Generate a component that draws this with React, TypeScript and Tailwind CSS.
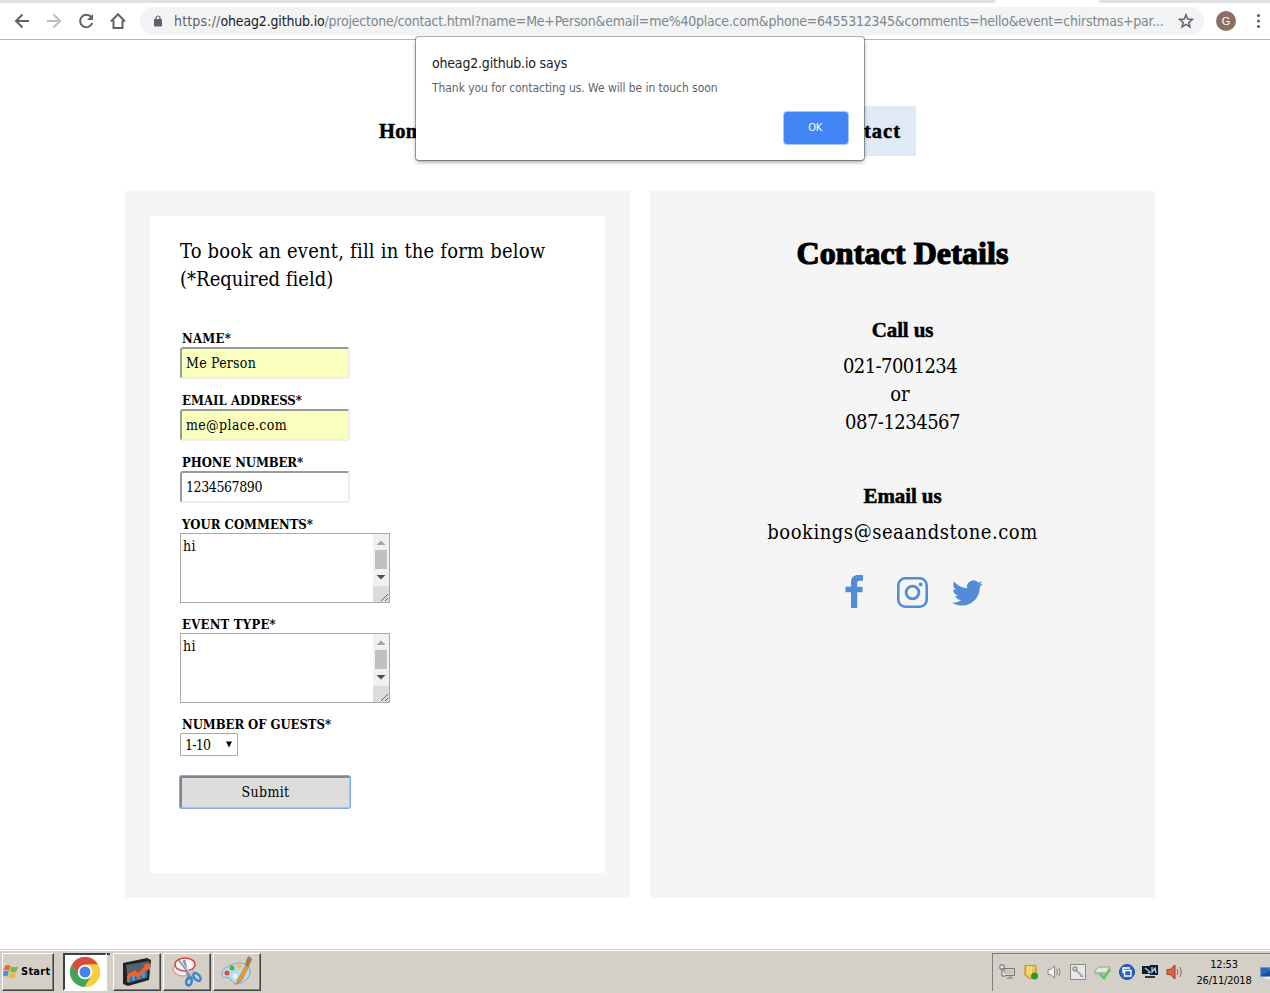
import type { ReactNode } from 'react';

const slab = "font-['DejaVu_Serif_Condensed','DejaVu_Serif',serif]";
const tahoma = "font-['DejaVu_Sans_Condensed','DejaVu_Sans',sans-serif]";
const display = "font-['Liberation_Serif',serif] font-bold";

function Toolbar() {
  return (
    <header className="flex h-10 shrink-0 flex-col border-b border-[#b3b6b5] bg-white">
      <div className="flex h-[3px] shrink-0 justify-between">
        <div className="w-[996px] rounded-br-[4px] bg-[#dee1e6]" />
        <div className="w-[171px] rounded-bl-[4px] bg-[#dee1e6]" />
      </div>
      <div className="flex items-center pt-1">
        <svg className="ml-[14px]" width="16" height="28" viewBox="0 0 16 28" fill="none" stroke="#5f6368" strokeWidth="2">
          <path d="M15 14H2.500M8.500 7.500 2 14l6.500 6.500" />
        </svg>
        <svg className="ml-4" width="16" height="28" viewBox="0 0 16 28" fill="none" stroke="#babcbe" strokeWidth="2">
          <path d="M1 14h12.500M7.500 7.500 14 14l-6.500 6.500" />
        </svg>
        <svg className="ml-4" width="16" height="28" viewBox="0 0 16 28" fill="none" stroke="#5f6368" strokeWidth="2">
          <path d="M13.300 10.300A6.200 6.200 0 1 0 14.200 16" />
          <path d="M15 7v6H9z" fill="#5f6368" stroke="none" />
        </svg>
        <svg className="ml-4" width="16" height="28" viewBox="0 0 16 28" fill="none" stroke="#5f6368" strokeWidth="2">
          <path d="M1 14.500 8 7.200l7 7.300M3.500 13.500v7.500h9v-7.500" />
        </svg>
        <div className="ml-[14px] flex h-7 w-[1064px] items-center rounded-full bg-[#f1f3f4]">
          <svg className="ml-[14px]" width="8" height="12" viewBox="0 0 8 12">
            <rect y="4" width="8" height="7.500" rx="1" fill="#5f6368" />
            <path d="M2 5V3a2 2 0 0 1 4 0v2" fill="none" stroke="#5f6368" strokeWidth="1.200" />
          </svg>
          <div className={`${tahoma} ml-3 flex w-[990px] text-[14px] leading-[18px] whitespace-nowrap`}>
            <span className="tracking-[0.17px] text-[#5f6368]">https://</span>
            <span className="tracking-[-0.17px] text-[#202124]">oheag2.github.io</span>
            <span className="tracking-[-0.226px] text-[#80868b]">
              /projectone/contact.html?name=Me+Person&amp;email=me%40place.com&amp;phone=6455312345&amp;comments=hello&amp;event=chirstmas+par...
            </span>
          </div>
          <svg className="ml-[14px]" width="16" height="16" viewBox="0 0 16 16" fill="none" stroke="#5f6368" strokeWidth="1.500">
            <path d="m8 1.800 1.700 4.300 4.700.3-3.600 3 1.200 4.500L8 11.400l-4 2.500 1.200-4.500-3.600-3 4.700-.3z" />
          </svg>
        </div>
        <div className="ml-3 flex size-5 items-center justify-center rounded-full bg-[#8d6e63] font-['Liberation_Sans',sans-serif] text-[11px] text-white">G</div>
        <svg className="ml-5" width="6" height="16" viewBox="0 0 6 16" fill="#5f6368">
          <circle cx="2.500" cy="2.500" r="1.600" /><circle cx="2.500" cy="8" r="1.600" /><circle cx="2.500" cy="13.500" r="1.600" />
        </svg>
      </div>
    </header>
  );
}

function Dialog() {
  return (
    <div role="dialog" className={`${tahoma} absolute top-[37px] left-[416px] z-10 flex h-[123px] w-[448px] flex-col rounded-[3px] bg-white px-4 pt-4 shadow-[0_0_0_1px_rgba(0,0,0,0.3),0_2px_4px_rgba(0,0,0,0.4)]`}>
      <div className="text-[14px] leading-5 tracking-[-0.19px] text-[#202124]">oheag2.github.io says</div>
      <div className="mt-[5px] text-[12px] leading-5 tracking-[-0.066px] text-[#5f6368]">Thank you for contacting us. We will be in touch soon</div>
      <button className="mt-[13px] mr-[-1px] h-[34px] w-[66px] self-end rounded-[4px] border border-[#a9c7fa] bg-[#4285f4] pt-px pr-0.5 text-[11px] tracking-[-0.3px] text-white">OK</button>
    </div>
  );
}

function Label({ children, track }: { children: ReactNode; track: string }) {
  return <label className={`block h-[18px] pl-0.5 text-[13px] leading-[19px] font-bold whitespace-nowrap ${track}`}>{children}</label>;
}

function Field({ label, track, value, valueTrack, filled }: { label: string; track: string; value: string; valueTrack: string; filled?: boolean }) {
  return (
    <div>
      <Label track={track}>{label}</Label>
      <input
        defaultValue={value}
        className={`block h-8 w-[170px] rounded-[3px] border-2 border-t-[#9a9a9a] border-r-[#eeeeee] border-b-[#eeeeee] border-l-[#9a9a9a] px-1 text-[14px] outline-none ${valueTrack} ${filled ? 'bg-[#faffbd]' : 'bg-white'}`}
      />
    </div>
  );
}

function TextArea({ label, track }: { label: string; track: string }) {
  return (
    <div>
      <Label track={track}>{label}</Label>
      <div className="flex h-[70px] w-[210px] justify-between border border-[#a9a9a9] bg-white">
        <span className="pt-0.5 pl-0.5 text-[14px] leading-5 tracking-[0.5px]">hi</span>
        <div className="flex w-4 flex-col items-center bg-[#f1f1f1]">
          <svg width="16" height="16" viewBox="0 0 16 16"><path d="m3.500 11 4.500-4.500 4.500 4.500z" fill="#a3a3a3" /></svg>
          <div className="h-[19px] w-3 bg-[#c1c1c1]" />
          <svg width="16" height="17" viewBox="0 0 16 17"><path d="m3.500 6 4.500 4.500L12.500 6z" fill="#505050" /></svg>
          <svg className="bg-[#dcdcdc]" width="16" height="16" viewBox="0 0 16 16"><path d="m8 15 7-7M12 15l3-3" stroke="#666" /></svg>
        </div>
      </div>
    </div>
  );
}

function BookingForm() {
  return (
    <section className="h-[707px] w-[505px] bg-[#f5f5f5] p-[25px]">
      <form className="flex h-[657px] flex-col bg-white px-[30px] pt-[21px]">
        <p className="h-[92px] text-[20px] leading-7 whitespace-nowrap">
          <span className="block tracking-[0.2px]">To book an event, fill in the form below</span>
          <span className="block tracking-[0.03px]">(*Required field)</span>
        </p>
        <div className="flex flex-col gap-3">
          <Field label="NAME*" track="tracking-[0.25px]" value="Me Person" valueTrack="tracking-[0.24px]" filled />
          <Field label="EMAIL ADDRESS*" track="tracking-[0.04px]" value="me@place.com" valueTrack="tracking-[0.36px]" filled />
          <Field label="PHONE NUMBER*" track="tracking-[-0.09px]" value="1234567890" valueTrack="tracking-[-0.41px]" />
          <TextArea label="YOUR COMMENTS*" track="tracking-[0.01px]" />
          <TextArea label="EVENT TYPE*" track="tracking-[0.25px]" />
          <div>
            <Label track="tracking-[-0.05px]">NUMBER OF GUESTS*</Label>
            <div className="flex h-[23px] w-[58px] items-center justify-between rounded-[1px] border border-[#a9a9a9] bg-white pr-[5px] pl-1 text-[14px] tracking-[-0.8px]">
              <span className="pt-0.5">1-10</span>
              <svg width="6" height="8" viewBox="0 0 6 8"><path d="M0 .5h6L3 6.500z" /></svg>
            </div>
          </div>
        </div>
        <button type="button" className="mt-5 h-8 w-[170px] shrink-0 rounded-[2px] border border-t-2 border-l-2 border-t-[#7f8592] border-r-[#b9bfca] border-b-[#b9bfca] border-l-[#7f8592] bg-[#dddddd] text-[14px] tracking-[0.35px] shadow-[0_0_0_1px_#7ea9ee]">Submit</button>
      </form>
    </section>
  );
}

function ContactDetails() {
  return (
    <section className="flex h-[707px] w-[505px] flex-col items-center bg-[#f5f5f5] pt-[41px] whitespace-nowrap">
      <h1 className={`${display} text-[32px] leading-[42px] tracking-[0.1px] [-webkit-text-stroke:1.2px_black]`}>Contact Details</h1>
      <h2 className={`${display} mt-[42px] text-[21px] leading-7 tracking-[-0.14px] [-webkit-text-stroke:0.5px_black]`}>Call us</h2>
      <p className="mt-2 flex flex-col items-center text-[20px] leading-7">
        <span className="mr-[5px] tracking-[-0.58px]">021-7001234</span>
        <span className="mr-[5px]">or</span>
        <span className="tracking-[-0.5px]">087-1234567</span>
      </p>
      <h2 className={`${display} mt-[46px] text-[21px] leading-7 tracking-[-0.1px] [-webkit-text-stroke:0.5px_black]`}>Email us</h2>
      <p className="mt-2 text-[20px] leading-7 tracking-[0.53px]">bookings@seaandstone.com</p>
      <div className="mt-[29px] ml-[23px] flex items-center text-[#528cd6]">
        <svg width="18" height="33" viewBox="0 0 18 33" fill="currentColor">
          <path d="M18 .3v5.400h-3.300c-2 0-2.500 1-2.500 2.500v3.500h5.300v5.500h-5.300V33H6V17.200H.5v-5.500H6V7.300C6 2.600 8.800 0 13.200 0c2 0 4 .1 4.800.3z" />
        </svg>
        <svg className="mt-[2px] ml-[34px]" width="31" height="31" viewBox="0 0 31 31" fill="none" stroke="currentColor">
          <rect x="1.300" y="1.300" width="28.400" height="28.400" rx="7" strokeWidth="2.600" />
          <circle cx="15.500" cy="15.500" r="6.400" strokeWidth="2.800" />
          <circle cx="23.700" cy="7.400" r="1.900" fill="currentColor" stroke="none" />
        </svg>
        <svg className="mt-[2px] ml-6" width="31" height="26" viewBox="0 2 24 20" fill="currentColor">
          <path d="M23.950 4.570a10 10 0 0 1-2.820.77 4.960 4.960 0 0 0 2.160-2.720c-.95.55-2 .95-3.120 1.180a4.920 4.920 0 0 0-8.390 4.490C7.690 8.090 4.070 6.130 1.640 3.160a4.920 4.920 0 0 0 1.520 6.570 4.900 4.900 0 0 1-2.230-.61v.06a4.920 4.920 0 0 0 3.950 4.830 5 5 0 0 1-2.210.08 4.940 4.940 0 0 0 4.600 3.420A9.870 9.870 0 0 1 0 19.540a13.990 13.990 0 0 0 7.550 2.210c9.050 0 14-7.500 14-13.980 0-.21 0-.42-.02-.63a9.940 9.940 0 0 0 2.420-2.570z" />
        </svg>
      </div>
    </section>
  );
}

const raised = 'border border-t-white border-l-white border-r-[#404040] border-b-[#404040] bg-[#d4d0c8] shadow-[inset_-1px_-1px_0_#808080]';

function Taskbar() {
  return (
    <footer className="mt-auto flex h-[44px] shrink-0 items-start justify-between border-t border-[#d4d0c8] bg-[#d4d0c8]">
      <div className="flex h-[43px] w-full items-start justify-between border-t border-white pt-[2px]">
        <div className="flex">
          <button className={`${raised} ${tahoma} ml-0.5 flex h-[38px] w-[52px] items-center text-[11px] font-bold tracking-[0.25px]`}>
            <svg className="mr-0.5 mb-0.5 shrink-0" width="16" height="15" viewBox="0 0 16 15">
              <path d="M2 2q3-2 5.500 0L6 7Q3.500 5 .5 7z" fill="#ea6b23" />
              <path d="M8.300 2.300q3 2 6.700 0L13.500 7.500q-3 2-6.500 0z" fill="#79b743" />
              <path d="M.3 7.800q3-2 5.500 0l-1.500 5q-2.500-2-4.300 0z" fill="#4a91dc" />
              <path d="M6.700 8.300q3 2 6.500 0l-1.500 5q-3 2-6.500 0z" fill="#f2bd2d" />
            </svg>
            Start
          </button>
          <div className="ml-[9px] flex h-[38px] w-[44px] items-center justify-center border-2 border-t-[#404040] border-r-white border-b-white border-l-[#404040] bg-white">
            <svg width="30" height="30" viewBox="0 0 30 30">
              <circle cx="15" cy="15" r="15" fill="#e9b92a" />
              <path d="M2 7.500A15 15 0 0 1 28 7.500H15L8.500 18.800z" fill="#d94b3d" />
              <path d="M2 7.500 8.500 18.700 15 22.500 21.500 18.700 14.500 30A15 15 0 0 1 2 7.500z" fill="#3da55c" />
              <path d="M15 7.500H28A15 15 0 0 1 14.500 30l7-11.300z" fill="#f9ce3e" />
              <circle cx="15" cy="15" r="7.300" fill="white" /><circle cx="15" cy="15" r="5.500" fill="#4384ee" />
            </svg>
          </div>
          <div className="h-[38px] w-[3px] border-t-2 border-t-[#404040] bg-[#d4d0c8]" />
          <div className={`${raised} ml-[3px] flex h-[38px] w-[48px] items-center justify-center`}>
            <svg width="30" height="30" viewBox="0 0 30 30">
              <path d="m1 6 24-5 4 2-2 20-21 6-5-2z" fill="#222" />
              <path d="M4 8 27 4l-2 17L6 26z" fill="#526270" />
              <path d="M5 25v-6l3-1v7zM10 24v-8l3-1v8zM15 22v-5l3-1v6zM20 21v-8h3v7z" fill="#3f9ee4" />
              <path d="m5 23 1-6 7-4 3 3 7-7-3-1 8-2v8l-2-2-10 9-4-3z" fill="#f3602f" />
            </svg>
          </div>
          <div className={`${raised} ml-0.5 flex h-[38px] w-[48px] items-center justify-center`}>
            <svg width="32" height="32" viewBox="0 0 32 32" fill="none">
              <ellipse cx="12" cy="13" rx="10" ry="7" fill="#f4eeee" stroke="#e4a3a3" strokeWidth="1.500" />
              <ellipse cx="14" cy="8.500" rx="10" ry="6.500" fill="#f7f5f5" stroke="#d84444" strokeWidth="1.500" />
              <path d="m8 4 14 18M13 4l5 20" stroke="#8696a2" strokeWidth="2.500" />
              <path d="m9 4 14 18" stroke="#fff" strokeWidth=".8" />
              <ellipse cx="18" cy="25.500" rx="2.700" ry="4" transform="rotate(15 18 25.500)" stroke="#3586cc" strokeWidth="2.500" />
              <ellipse cx="26" cy="21" rx="2.700" ry="4.500" transform="rotate(-40 26 21)" stroke="#3586cc" strokeWidth="2.500" />
            </svg>
          </div>
          <div className={`${raised} ml-0.5 flex h-[38px] w-[48px] items-center justify-center`}>
            <svg width="32" height="32" viewBox="0 0 32 32">
              <path d="M13 8c9-3 17 1 16 9-1 7-9 12-16 10-3-1-2-4-5-5s-7 0-7-5c0-4 6-7 12-9z" fill="#b9dced" stroke="#7aa5c3" />
              <circle cx="6" cy="17" r="2.500" fill="#dd4b43" /><circle cx="11" cy="12" r="2.500" fill="#57ae49" />
              <circle cx="18" cy="10" r="2.500" fill="#edc23b" /><circle cx="14" cy="20" r="2.500" fill="#e6f5fa" />
              <path d="m15 29 2-6 8-14 3 1-7 14z" fill="#e89a33" stroke="#b47422" strokeWidth=".6" />
              <path d="m24 9 2-7 2-2 3 3-1 3-3 5z" fill="#a67b4e" />
            </svg>
          </div>
        </div>
        <div className="flex h-[38px] w-[278px] items-center border-t border-l border-[#808080] pl-[6px]">
          <div className="flex w-[184px] items-center justify-between pb-0.5">
            <svg width="16" height="16" viewBox="0 0 16 16" fill="none">
              <path d="M5 4.500h10.500v7H5zM8 14h6M11 12v2" stroke="#777" /><path d="M6 6h8v4H6z" fill="#c4c4c4" />
              <path d="M1 1h4v4H1zM3 5v7h4" fill="#eee" stroke="#666" />
            </svg>
            <svg width="16" height="16" viewBox="0 0 16 16">
              <path d="m2 1 3 1 2-1 2 1 2-1 2 1v8l-6 5-5-4z" fill="#f1c44b" stroke="#b88a20" /><path d="M5 2v9M8 2v10" stroke="#fff3b2" />
              <circle cx="11.500" cy="12" r="3.500" fill="#239b35" />
            </svg>
            <svg width="16" height="16" viewBox="0 0 16 16" fill="none" stroke="#888">
              <path d="M2 5.500h2.500L8.500 2v12L4.500 10.500H2z" fill="#f3f3f3" /><path d="M10.500 5q2 3 0 6M13 4q2.500 4 0 8" />
            </svg>
            <svg width="16" height="16" viewBox="0 0 16 16"><path d="M.5.5h15v15H.5z" fill="#e8e8e8" stroke="#888" /><path d="m5 5 8 8M11 11v2" stroke="#aaa" strokeWidth="2" /><circle cx="5" cy="5" r="2" fill="none" stroke="#999" strokeWidth="1.500" /></svg>
            <svg width="17" height="16" viewBox="0 0 17 16"><path d="m1 7 4-4h11l-2 7H1z" fill="#e3e5e4" stroke="#999" /><path d="M1 8h12v3H1z" fill="#b5b7b6" /><path d="m6 10 4 4 6-9" fill="none" stroke="#65c85a" strokeWidth="2.800" /></svg>
            <svg width="16" height="16" viewBox="0 0 16 16"><circle cx="8" cy="8" r="7.500" fill="#2464c8" stroke="#1b4b9e" /><path d="M4 9V4h7M5.500 6.500H12V12H5.500z" fill="none" stroke="#fff" strokeWidth="1.400" /></svg>
            <svg width="16" height="16" viewBox="0 0 16 16"><path d="M0 2h9v8H0zM8 1h8v10H8z" fill="#101c2b" /><path d="m3 4 5 4-2 1M10 3v5l3-4 1 5" fill="none" stroke="#a6d9f6" strokeWidth="1.300" /><path d="M3 12h10v2H3z" fill="#333" /></svg>
            <svg width="17" height="16" viewBox="0 0 17 16"><path d="M1 5.500h3L9 1v14l-5-4.500H1z" fill="#dd6142" stroke="#98422d" /><path d="M11 5q2 3 0 6M14 3q3 5 0 10" fill="none" stroke="#a85b49" /></svg>
          </div>
          <div className={`${tahoma} ml-[13px] w-[56px] text-center text-[11px] leading-4 tracking-[-0.2px] whitespace-nowrap`}>
            <div>12:53</div><div>26/11/2018</div>
          </div>
          <svg className="ml-2 shrink-0" width="10" height="14" viewBox="0 0 10 14"><path d="M.5 1.500H10v9H.5z" fill="#246bc4" stroke="#7897b8" /><path d="M1 9q5-1 9-5v6H1z" fill="#184f9f" /><path d="M5 12h5" stroke="#eee" strokeWidth="2" /></svg>
        </div>
      </div>
    </footer>
  );
}

export default function App() {
  return (
    <div className={`${slab} relative flex h-[993px] w-[1270px] flex-col overflow-hidden bg-white text-black`}>
      <Toolbar />
      <Dialog />
      <nav className={`${display} mt-[66px] ml-[364px] flex h-[50px] w-[552px] shrink-0 justify-between text-[20.5px] leading-[50px] [-webkit-text-stroke:0.5px_black]`}>
        <a className="px-[15px] tracking-[0.3px]">Home</a>
        <a className="bg-[#e0eaf6] px-[15px] tracking-[1px]">Contact</a>
      </nav>
      <main className="mt-[35px] ml-[125px] flex gap-5">
        <BookingForm />
        <ContactDetails />
      </main>
      <Taskbar />
    </div>
  );
}
